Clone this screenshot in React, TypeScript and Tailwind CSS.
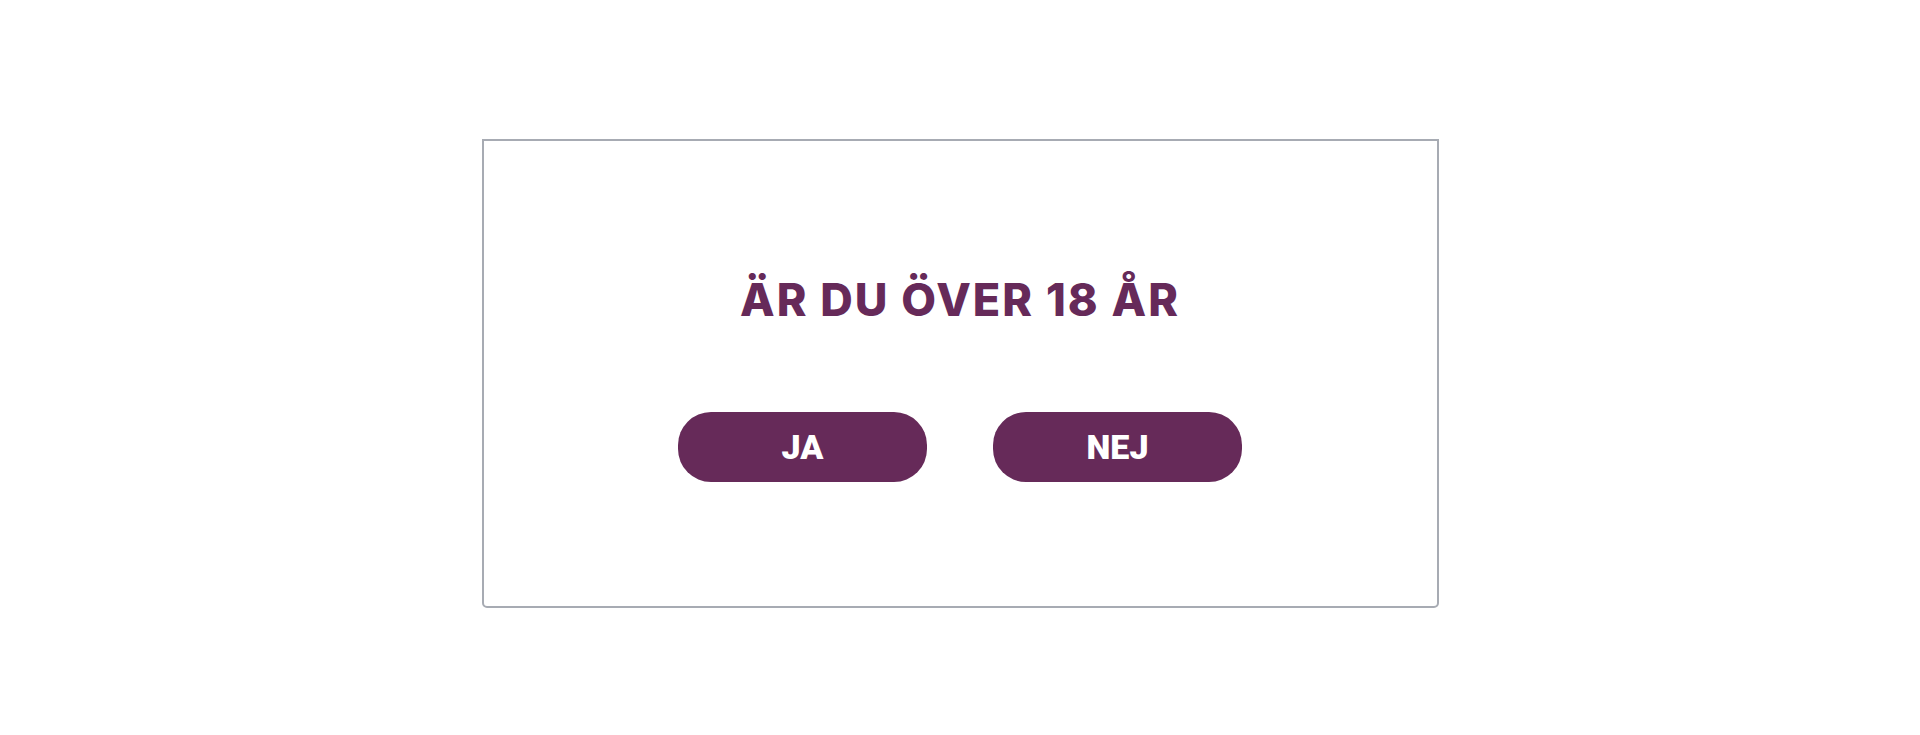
import React from "react";

export default function App() {
  return (
    <div className="min-h-[735px] w-full bg-white pt-[139px]">
      <div className="mx-auto flex h-[469px] w-[957px] flex-col items-center rounded-b-[5px] border-2 border-[#a7abb3] pt-[132px]">
        <h1
          className="text-[45px] leading-[54px] font-extrabold text-[#662a59] tracking-[2px]"
          style={{ fontFamily: "Inter, 'Noto Sans', sans-serif" }}
        >
          ÄR DU ÖVER 18 ÅR
        </h1>
        <div className="mt-[85px] flex gap-[66px]">
          <button
            className="flex h-[70px] w-[249px] items-center justify-center rounded-[33px] bg-[#662a59] text-[34px] font-black text-white"
            style={{ fontFamily: "Roboto, 'Liberation Sans', sans-serif" }}
          >
            JA
          </button>
          <button
            className="flex h-[70px] w-[249px] items-center justify-center rounded-[33px] bg-[#662a59] text-[34px] font-black text-white"
            style={{ fontFamily: "Roboto, 'Liberation Sans', sans-serif" }}
          >
            NEJ
          </button>
        </div>
      </div>
    </div>
  );
}
